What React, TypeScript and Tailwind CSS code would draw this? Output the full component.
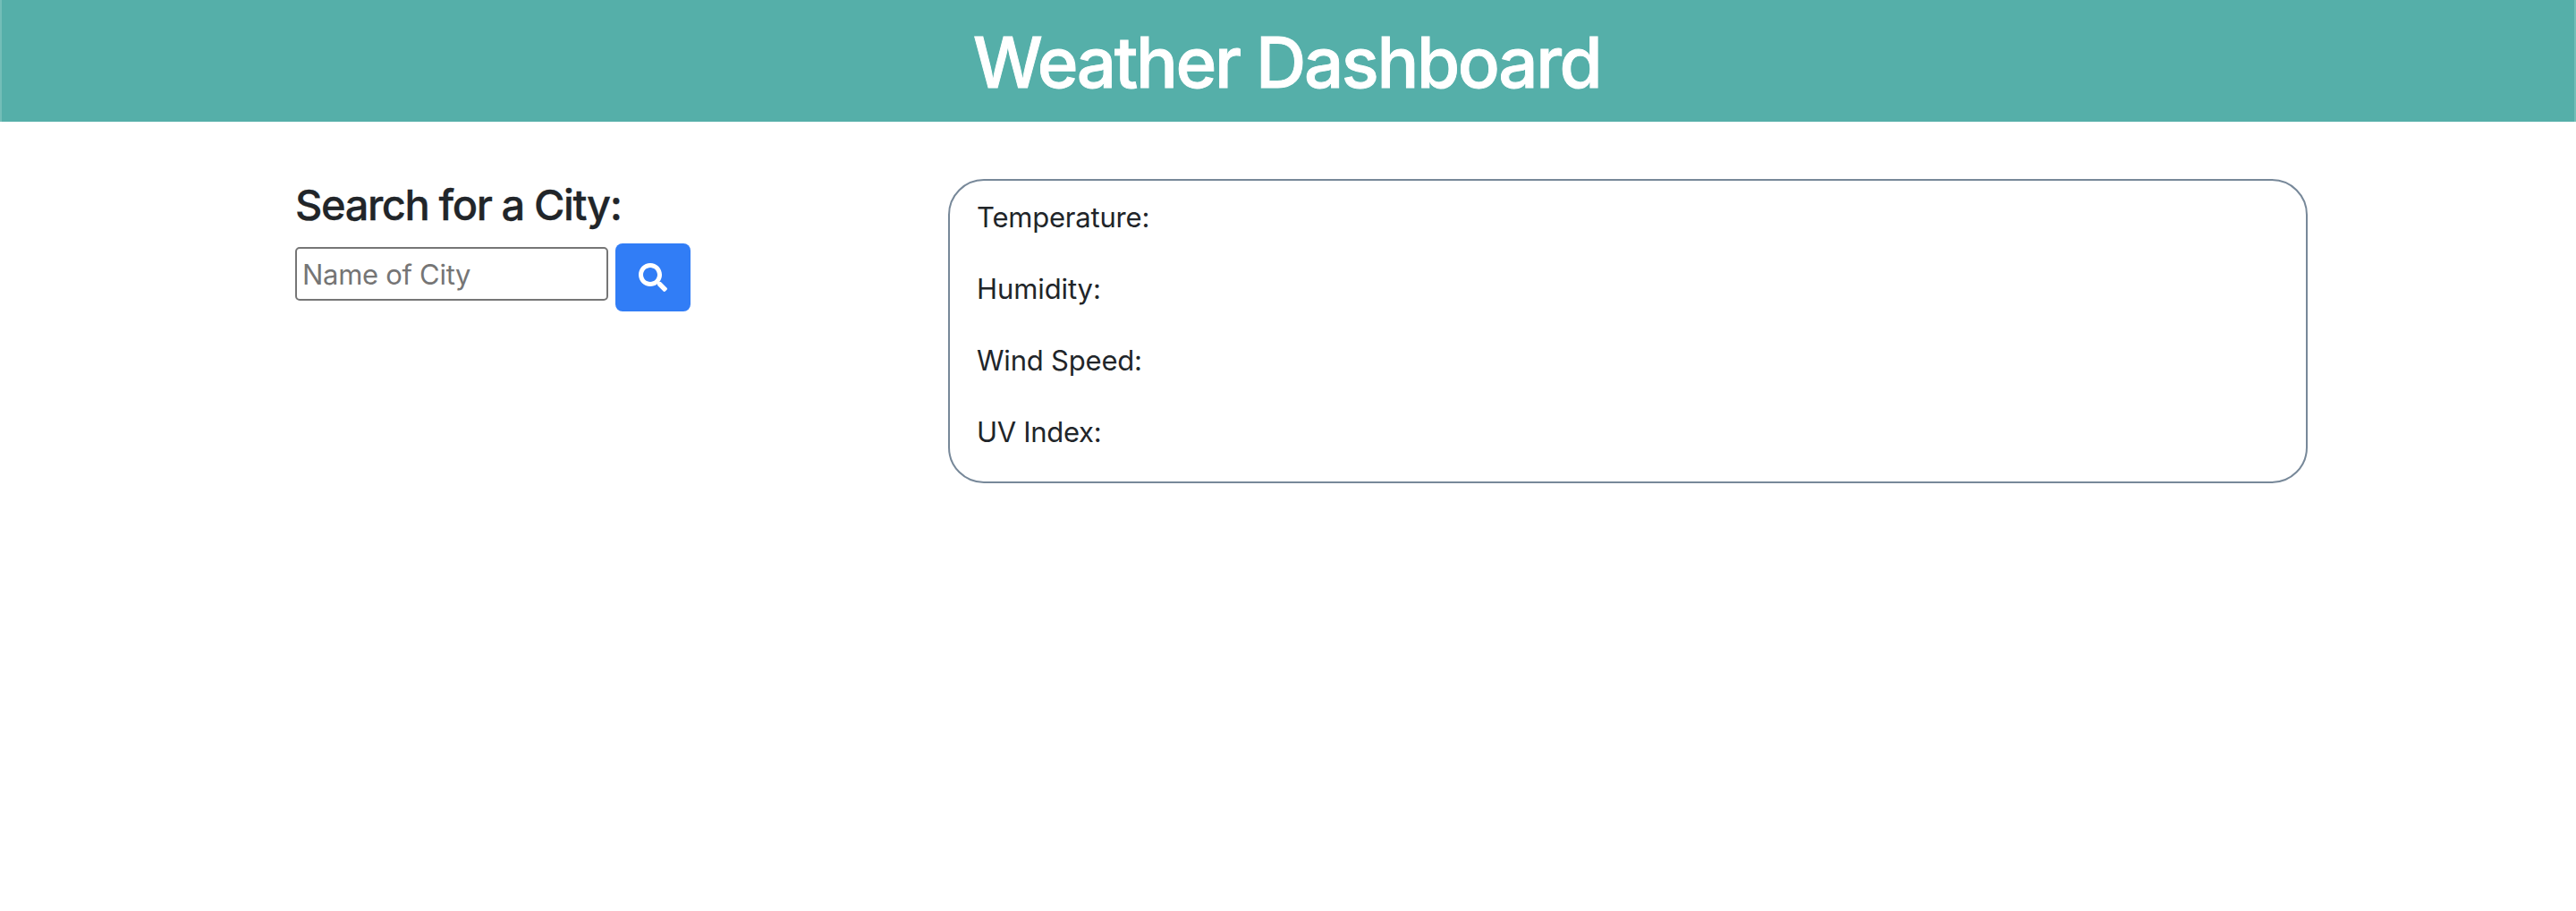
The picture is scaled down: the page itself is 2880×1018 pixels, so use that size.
import React from "react";
import { FaSearch } from "react-icons/fa";

const readings = [
  { label: "Temperature:", style: "tracking-[-0.2px]" },
  { label: "Humidity:", style: "tracking-[-0.1px]" },
  { label: "Wind Speed:", style: "tracking-[-0.2px]" },
  { label: "UV Index:", style: "tracking-[-0.3px]" },
];

export default function App() {
  return (
    <div className="min-h-[1018px] bg-white font-[Inter,sans-serif] text-[#212529]">
      <header className="flex h-[136px] justify-center border-x-2 border-[#73beb8] bg-[#55afa9] pt-[22px] pr-[3px]">
        <h1 className="text-[78px] leading-[96px] font-medium tracking-[-2.4px] whitespace-nowrap text-white [-webkit-text-stroke:0.9px_white]">
          Weather Dashboard
        </h1>
      </header>
      <main className="flex pt-16 pr-[300px] pl-[330px]">
        <section className="w-[730px] shrink-0">
          <h3 className="text-[47px] leading-[58px] font-medium tracking-[-1.4px] whitespace-nowrap [-webkit-text-stroke:0.3px_#212529]">
            Search for a City:
          </h3>
          <form className="mt-3.5 flex items-start gap-2" onSubmit={(e) => e.preventDefault()}>
            <input
              type="text"
              placeholder="Name of City"
              className="mt-1 h-[60px] w-[350px] rounded-[5px] border-2 border-[#767676] bg-white px-1.5 text-[31px] tracking-[-0.3px] outline-none placeholder:text-[#757575]"
            />
            <button
              type="submit"
              aria-label="Search"
              className="flex h-[76px] w-[84px] items-center justify-center rounded-lg bg-[#317df6] text-white"
            >
              <FaSearch className="size-8" />
            </button>
          </form>
        </section>
        <section className="h-[340px] flex-1 rounded-[40px] border-2 border-[#778899] pt-[17px] pl-[30px]">
          {readings.map((r) => (
            <p key={r.label} className="mb-8 text-[31px] leading-[48px]">
              <span className={r.style}>{r.label}</span>
            </p>
          ))}
        </section>
      </main>
    </div>
  );
}
